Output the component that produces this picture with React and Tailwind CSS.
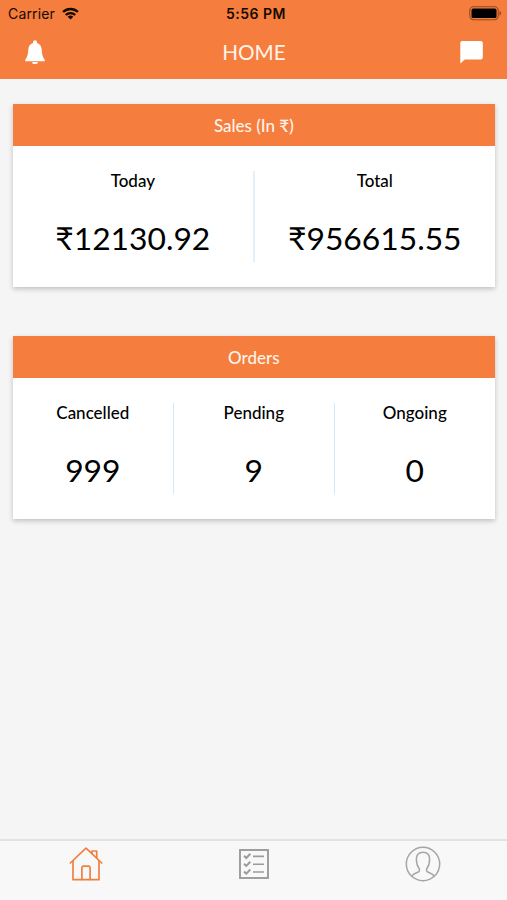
import React from 'react';

// Icons
const WifiIcon = () => (
  <svg className="w-[17px] h-[13px]" viewBox="0 0 18 13" fill="none" stroke="#160900" strokeWidth="2.5">
    <path d="M1.1 4.900a11.3 11.3 0 0 1 15.8 0" />
    <path d="M4 8.1a7.2 7.2 0 0 1 10 0" />
    <path d="M9 12.8 6 9.9a4.5 4.5 0 0 1 6 0z" fill="#160900" stroke="none" />
  </svg>
);

const BatteryIcon = () => (
  <svg className="w-[33px] h-[15px]" viewBox="0 0 33 15">
    <rect x="0.8" y="0.8" width="28.4" height="12.9" rx="3.6" fill="none" stroke="#93491f" strokeWidth="1.1" />
    <rect x="2.5" y="2.4" width="25" height="9.7" rx="1.6" fill="#000" />
    <path d="M30.5 5v4.6c1-.3 1.6-1.2 1.6-2.3S31.500 5.300 30.500 5z" fill="#93491f" />
  </svg>
);

const BellIcon = () => (
  <svg className="w-5 h-[25px]" viewBox="0 0 20 25" fill="#fff">
    <path d="M10 .2c1.200 0 2 .8 2 2v.8c3 .9 4.400 3.200 4.700 6.300.2 4.600.7 7.300 3 10.500v1.500H.3v-1.500c2.300-3.200 2.800-5.900 3-10.500C3.600 6.200 5 3.900 8 3v-.8c0-1.200.8-2 2-2z" />
    <path d="M7.300 22h5.400v.8c0 .9-.7 1.300-2.700 1.300s-2.700-.4-2.700-1.300z" />
  </svg>
);

const ChatIcon = () => (
  <svg className="w-[23px] h-[23px]" viewBox="0 0 23 23" fill="#fff">
    <path d="M2.200.1h18.600c1.100 0 2 .9 2 2v14.400c0 1.100-.9 2-2 2H4.800L.3 22.600V2.100c0-1.100.9-2 1.900-2z" />
  </svg>
);

const HomeIcon = () => (
  <svg className="w-[34px] h-[34px]" viewBox="0 0 34 34" fill="none" stroke="#f0803f" strokeWidth="1.700" strokeLinejoin="round" strokeLinecap="round">
    <path d="M1.300 16 17 1.200 32.700 16" />
    <path d="M4 13.800v18.900h26V13.800" />
    <path d="M12.900 32.500V20.700c0-1 .6-1.600 1.600-1.600h5c1 0 1.600.6 1.600 1.600v11.800" />
    <path d="M23 6.300V4h4.700v7" />
  </svg>
);

const ListIcon = () => (
  <svg className="w-[30px] h-[30px]" viewBox="0 0 30 30" fill="none" stroke="#9b9b9b">
    <rect x="1" y="1" width="28" height="28" strokeWidth="1.900" />
    <path d="m5 6.800 2.300 2.200 4-4.200M5 14.700l2.300 2.200 4-4.200M5 22.500l2.300 2.200 4-4.200" strokeWidth="2" />
    <path d="M14 7.400h11M14 15.300h11M14 23h11" strokeWidth="1.600" />
  </svg>
);

const ProfileIcon = () => (
  <svg className="w-[36px] h-[36px]" viewBox="0 0 36 36" fill="none" stroke="#a6a6a6" strokeWidth="1.500">
    <circle cx="18" cy="18" r="16.700" />
    <path d="M7 30c1.200-2 3.600-2.800 5.800-3.700 1.700-.7 2.100-2.100 1.300-3.800-1.700-2.200-2.700-4.600-2.700-9.300 0-4.600 2.100-7 6.600-7s6.600 2.400 6.600 7c0 4.700-1 7.100-2.700 9.300-.8 1.700-.4 3.100 1.300 3.800 2.200.9 4.600 1.700 5.800 3.700" />
  </svg>
);

const StatCard = ({ title, stats, divider }) => (
  <section className="h-[183px] bg-white shadow-[0_2px_5px_rgba(0,0,0,0.22)]">
    <h2 className="flex h-[42.5px] items-center justify-center bg-[#f57d3d] pt-[1.5px] text-[17px] font-medium text-[#fff3e9]">
      {title}
    </h2>
    <div className="flex pt-[24.5px]">
      {stats.map((stat, i) => (
        <div
          key={stat.label}
          className={`flex h-[91px] flex-1 flex-col items-center pt-[0.5px] text-black ${i < stats.length - 1 ? divider : ''}`}
        >
          <span className="text-[17px] leading-5 font-medium">{stat.label}</span>
          <span className="mt-[27px] text-[31.8px] leading-10">{stat.value}</span>
        </div>
      ))}
    </div>
  </section>
);

const sales = [
  { label: 'Today', value: '₹12130.92' },
  { label: 'Total', value: '₹956615.55' },
];

const orders = [
  { label: 'Cancelled', value: '999' },
  { label: 'Pending', value: '9' },
  { label: 'Ongoing', value: '0' },
];

function App() {
  return (
    <div className="flex h-screen flex-col bg-[#f5f5f5] font-['Lato',sans-serif]">
      <header className="h-[79px] bg-[#f57d3d]">
        {/* Status bar */}
        <div className="grid h-[27px] grid-cols-3 items-center pr-[5px] pl-2 font-['Inter',sans-serif] text-[#160900]">
          <div className="flex items-center gap-[7px]">
            <span className="text-[14px] tracking-[0.15px]">Carrier</span>
            <WifiIcon />
          </div>
          <span className="pl-0.5 text-center text-[14px] font-semibold tracking-[0.5px]">5:56 PM</span>
          <div className="flex justify-end">
            <BatteryIcon />
          </div>
        </div>
        {/* Navigation bar */}
        <div className="grid h-[50px] grid-cols-3 items-center pr-6 pl-[25px]">
          <BellIcon />
          <h1 className="pt-0.5 text-center text-[20.7px] text-[#fff3e9]">HOME</h1>
          <div className="flex justify-end">
            <ChatIcon />
          </div>
        </div>
      </header>

      <main className="flex flex-1 flex-col gap-[49px] pt-[24.5px] pr-[12.2px] pl-[12.8px]">
        <StatCard title="Sales (In ₹)" stats={sales} divider="border-r-2 border-[#e0f0fc]" />
        <StatCard title="Orders" stats={orders} divider="border-r border-[#d0ebfa]" />
      </main>

      <nav className="grid h-[61px] grid-cols-3 justify-items-center border-t-2 border-[#e2e2e2] bg-[#f8f8f8] pt-[5px]">
        <button className="flex h-9 items-center pl-[2px]"><HomeIcon /></button>
        <button className="flex h-9 items-center"><ListIcon /></button>
        <button className="flex h-9 items-center"><ProfileIcon /></button>
      </nav>
    </div>
  );
}

export default App;
